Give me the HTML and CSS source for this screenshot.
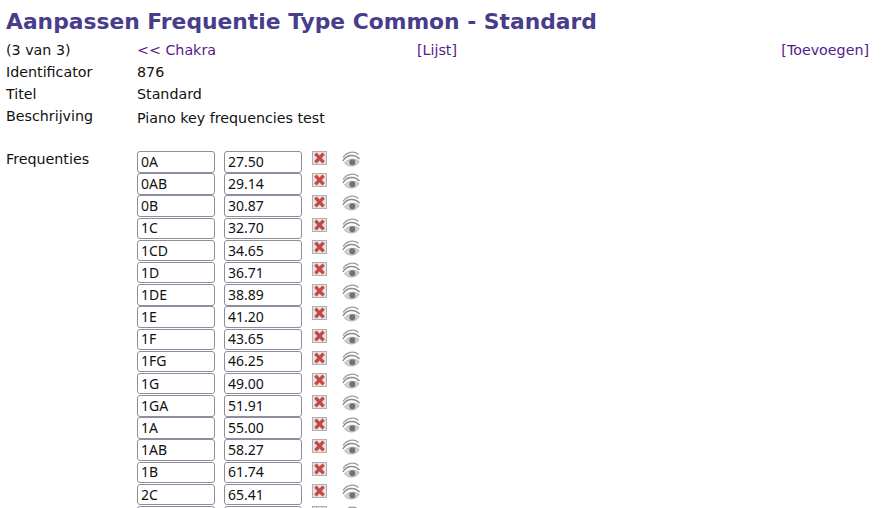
FILE: index.html
```html
<!DOCTYPE html>
<html>
<head>
<meta charset="utf-8">
<title>Aanpassen Frequentie Type Common - Standard</title>
<link rel="stylesheet" href="styles.css">
</head>
<body>
<svg class="defs" width="0" height="0">
  <defs>
    <filter id="soft" x="-10%" y="-10%" width="120%" height="120%"><feGaussianBlur stdDeviation="0.35"/></filter>
    <symbol id="del" viewBox="0 0 15 14">
      <rect x="0.5" y="0.5" width="14" height="13" fill="#e6e2e2" stroke="#b4afaf"/>
      <path d="M3.4 2.6L11.6 11.4M11.6 2.6L3.4 11.4" stroke="#c4484a" stroke-width="3.4" filter="url(#soft)"/>
    </symbol>
    <symbol id="eye" viewBox="0 0 18 17">
      <path d="M1 6.5C4.5 1 12 -.5 16.5 3.5" fill="none" stroke="#9c9c9c" stroke-width="1.3" filter="url(#soft)"/>
      <path d="M1 10C4.5 3.5 12.5 2.5 17.5 8" fill="none" stroke="#8c8c8c" stroke-width="1.5" filter="url(#soft)"/>
      <path d="M2.5 12C6 7.5 13 7 17 10.5C14 16 7 16.5 2.5 12Z" fill="#d4d4d4" stroke="#a2a2a2" stroke-width=".8" filter="url(#soft)"/>
      <circle cx="10.3" cy="11.2" r="3" fill="#727272" filter="url(#soft)"/>
    </symbol>
  </defs>
</svg>
<h1 class="title">Aanpassen Frequentie Type Common - Standard</h1>
<div class="nav">
  <span class="label">(3 van 3)</span>
  <a class="prev" href="#">&lt;&lt; Chakra</a>
  <span class="bracket">[<a href="#">Lijst</a>]</span>
  <span class="bracket">[<a href="#">Toevoegen</a>]</span>
</div>
<div class="field"><span class="label">Identificator</span><span>876</span></div>
<div class="field"><span class="label">Titel</span><span>Standard</span></div>
<div class="field"><span class="label">Beschrijving</span><span class="desc-val">Piano key frequencies test</span></div>
<div class="freq">
  <span class="label">Frequenties</span>
  <div class="rows">
    <div class="row"><input value="0A"><input value="27.50"><svg class="del"><use href="#del"/></svg><svg class="eye"><use href="#eye"/></svg></div>
    <div class="row"><input value="0AB"><input value="29.14"><svg class="del"><use href="#del"/></svg><svg class="eye"><use href="#eye"/></svg></div>
    <div class="row"><input value="0B"><input value="30.87"><svg class="del"><use href="#del"/></svg><svg class="eye"><use href="#eye"/></svg></div>
    <div class="row"><input value="1C"><input value="32.70"><svg class="del"><use href="#del"/></svg><svg class="eye"><use href="#eye"/></svg></div>
    <div class="row"><input value="1CD"><input value="34.65"><svg class="del"><use href="#del"/></svg><svg class="eye"><use href="#eye"/></svg></div>
    <div class="row"><input value="1D"><input value="36.71"><svg class="del"><use href="#del"/></svg><svg class="eye"><use href="#eye"/></svg></div>
    <div class="row"><input value="1DE"><input value="38.89"><svg class="del"><use href="#del"/></svg><svg class="eye"><use href="#eye"/></svg></div>
    <div class="row"><input value="1E"><input value="41.20"><svg class="del"><use href="#del"/></svg><svg class="eye"><use href="#eye"/></svg></div>
    <div class="row"><input value="1F"><input value="43.65"><svg class="del"><use href="#del"/></svg><svg class="eye"><use href="#eye"/></svg></div>
    <div class="row"><input value="1FG"><input value="46.25"><svg class="del"><use href="#del"/></svg><svg class="eye"><use href="#eye"/></svg></div>
    <div class="row"><input value="1G"><input value="49.00"><svg class="del"><use href="#del"/></svg><svg class="eye"><use href="#eye"/></svg></div>
    <div class="row"><input value="1GA"><input value="51.91"><svg class="del"><use href="#del"/></svg><svg class="eye"><use href="#eye"/></svg></div>
    <div class="row"><input value="1A"><input value="55.00"><svg class="del"><use href="#del"/></svg><svg class="eye"><use href="#eye"/></svg></div>
    <div class="row"><input value="1AB"><input value="58.27"><svg class="del"><use href="#del"/></svg><svg class="eye"><use href="#eye"/></svg></div>
    <div class="row"><input value="1B"><input value="61.74"><svg class="del"><use href="#del"/></svg><svg class="eye"><use href="#eye"/></svg></div>
    <div class="row"><input value="2C"><input value="65.41"><svg class="del"><use href="#del"/></svg><svg class="eye"><use href="#eye"/></svg></div>
    <div class="row"><input value="2CD"><input value="69.30"><svg class="del"><use href="#del"/></svg><svg class="eye"><use href="#eye"/></svg></div>
  </div>
</div>
</body>
</html>
```
FILE: styles.css
```css
html, body { height: 100%; overflow: hidden; }
body {
  margin: 0;
  padding: 0 6px;
  background: #fff;
  color: #111;
  font-family: "DejaVu Sans", sans-serif;
  font-size: 14.25px;
  line-height: 17px;
}
.defs { position: absolute; }
.title {
  margin: 0;
  height: 39px;
  padding-top: 9px;
  box-sizing: border-box;
  font-size: 21.82px;
  line-height: 26px;
  font-weight: bold;
  color: #483d8b;
}
a { color: #551a8b; text-decoration: none; }
.bracket { color: #551a8b; }
.nav {
  display: grid;
  grid-template-columns: 131px 280px 1fr auto;
  height: 22px;
  padding-right: 7px;
  align-items: center;
}
.field {
  display: grid;
  grid-template-columns: 131px 1fr;
  height: 22px;
  align-items: center;
}
.desc-val { padding-top: 4px; }
.freq {
  display: grid;
  grid-template-columns: 131px 1fr;
  margin-top: 24px;
}
.rows { display: flex; flex-direction: column; }
.row {
  display: flex;
  align-items: flex-start;
  height: 22.2px;
}
input {
  box-sizing: border-box;
  width: 78px;
  height: 21.5px;
  margin: 0 9px 0 0;
  padding: 0 3px 1px;
  border: 1px solid #8f8d9d;
  border-radius: 3px;
  background: #fff;
  color: #111;
  font-family: "Noto Sans", sans-serif;
  font-size: 14px;
}
.del { width: 15px; height: 14px; margin-left: 1px; }
.eye { width: 18px; height: 17px; margin-left: 15px; }
```
